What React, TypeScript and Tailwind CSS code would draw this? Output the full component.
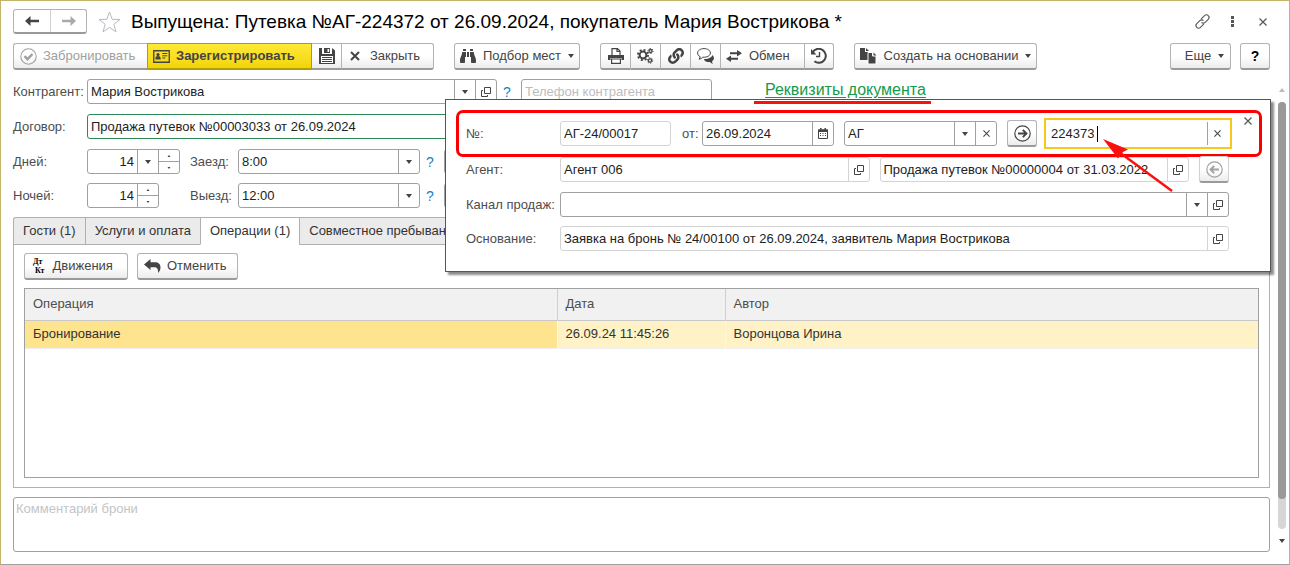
import React from 'react';
import clsx from 'clsx';
import { FaBinoculars, FaLink } from 'react-icons/fa';

const BUTTON =
  'flex h-[27px] items-center border border-b-2 border-[#b3b3b3] border-b-[#9a9a9a] bg-linear-to-b from-white from-50% to-[#ececec] text-[#444]';

const Caret = ({ up = false, small = false }: { up?: boolean; small?: boolean }) => (
  <svg width={small ? 4 : 6} height={small ? 2 : 4} viewBox="0 0 6 4" className={clsx('shrink-0', up && 'rotate-180')}>
    <path d="M0 0h6L3 4z" fill="currentColor" />
  </svg>
);

const Cross = ({ size = 7 }: { size?: number }) => (
  <svg width={size} height={size} viewBox="0 0 8 8">
    <path d="M.5.5l7 7M7.5.5l-7 7" stroke="currentColor" strokeWidth="1.2" fill="none" />
  </svg>
);

const OpenIcon = () => (
  <svg width="10" height="10" viewBox="0 0 10 10" fill="none" stroke="currentColor">
    <path d="M3.5.5h6v6h-6z" />
    <path d="M2 3.5H.5v6h6V8" />
  </svg>
);

const CalendarIcon = () => (
  <svg width="10" height="11" viewBox="0 0 10 11">
    <path d="M.5 2h9v8.5h-9z" fill="none" stroke="currentColor" />
    <path d="M0 1.5h10V4H0zM2 0h1.5v2H2zM6.5 0H8v2H6.5z" fill="currentColor" />
    <path d="M2 5.5h6M2 7.5h6" stroke="currentColor" strokeDasharray="1 1.5" />
  </svg>
);

const Arrow = ({ right = false }: { right?: boolean }) => (
  <svg width="14" height="10" viewBox="0 0 14 10" className={clsx(right && 'rotate-180')}>
    <path d="M5.5 0v3.8H14v2.4H5.5V10L0 5z" fill="currentColor" />
  </svg>
);

const CircleArrow = ({ left = false }: { left?: boolean }) => (
  <svg width="17" height="17" viewBox="0 0 17 17" fill="none" stroke="currentColor" className={clsx(left && 'rotate-180')}>
    <circle cx="8.5" cy="8.5" r="7.7" strokeWidth="1.2" />
    <path d="M4 8.5h8M8.8 4.8l3.7 3.7-3.7 3.7" strokeWidth="1.9" />
  </svg>
);

const CheckCircle = () => (
  <svg width="17" height="17" viewBox="0 0 17 17" fill="none" stroke="currentColor">
    <circle cx="8.5" cy="8.5" r="7.7" strokeWidth="1.1" />
    <path d="M4.5 8.2l3 3L12.5 6" strokeWidth="2.4" />
  </svg>
);

const CardIcon = () => (
  <svg width="17" height="13" viewBox="0 0 17 13">
    <path d="M.75.75h15.5v11.5H.75z" fill="none" stroke="currentColor" strokeWidth="1.3" />
    <circle cx="5" cy="4.6" r="1.6" fill="currentColor" />
    <path d="M2.4 9.5V8c0-1.3 1-2 2.6-2s2.6.7 2.6 2v1.5z" fill="currentColor" />
    <path d="M9.3 3.5h5M9.3 5.8h5M9.3 8h3" stroke="currentColor" />
  </svg>
);

const SaveIcon = () => (
  <svg width="16" height="16" viewBox="0 0 16 16">
    <path d="M0 0h3v6h10V0l3 2.5V16H0zM5 0h6v5H5z" fill="currentColor" />
    <path d="M8.5 1h1.7v3H8.5zM2 8h12v7H2z" fill="#fff" />
    <path d="M3 9.5h10M3 11.5h10M3 13.5h10" stroke="currentColor" />
  </svg>
);

const PrintIcon = () => (
  <svg width="16" height="16" viewBox="0 0 16 16">
    <path d="M4 7V.6h5.500L12 3v4M9 .6V3.500h3" fill="none" stroke="currentColor" strokeWidth="1.2" />
    <path d="M0 7h16v5h-2.500v-2h-11v2H0z" fill="currentColor" />
    <path d="M3.600 11h8.800v4.400H3.600z" fill="#fff" stroke="currentColor" strokeWidth="1.2" />
  </svg>
);

const GearsIcon = () => (
  <svg width="17" height="16" viewBox="0 0 17 16" fill="none" stroke="currentColor">
    <circle cx="6" cy="7" r="3.400" strokeWidth="2" />
    <circle cx="6" cy="7" r="5.100" strokeWidth="1.800" strokeDasharray="2 2" />
    <circle cx="13.500" cy="3" r="1.500" strokeWidth="1.300" />
    <circle cx="13.500" cy="3" r="2.500" strokeWidth="1" strokeDasharray="1.300 1.300" />
    <circle cx="13" cy="12.500" r="1.600" strokeWidth="1.300" />
    <circle cx="13" cy="12.500" r="2.700" strokeWidth="1" strokeDasharray="1.400 1.400" />
  </svg>
);

const ChatIcon = () => (
  <svg width="17" height="16" viewBox="0 0 17 16">
    <path d="M15.500 7c.9.9 1.400 2 1.400 3.200 0 1.400-.8 2.500-1.900 3.200.1.900.4 1.600 1 2.300-1.500-.2-2.500-.8-3.200-1.600-3 .1-5.300-.9-6-2.900 4.300-.1 7.800-1.400 8.700-4.200z" fill="currentColor" />
    <path d="M7 .6C3.300.6.600 2.500.600 5c0 1.700 1 3 2.600 3.700-.1 1-.5 1.800-1.200 2.500 1.600-.2 2.900-.9 3.800-2 4.500.3 7.600-1.500 7.600-4.200C13.400 2.500 10.700.6 7 .6z" fill="#fff" stroke="currentColor" />
  </svg>
);

const ExchangeIcon = () => (
  <svg width="16" height="12" viewBox="0 0 16 12">
    <path d="M4 2.200h7V0l5 3.200-5 3.200V4.200H4zM12 7.800H5V5.600L0 8.800 5 12V9.800h7z" fill="currentColor" />
  </svg>
);

const HistoryIcon = () => (
  <svg width="16" height="16" viewBox="0 0 16 16" fill="none" stroke="currentColor">
    <path d="M1.600 4.500A7 7 0 1 1 3.400 13.300" strokeWidth="2" />
    <path d="M0 1v5.500h5.500z" fill="currentColor" stroke="none" />
    <path d="M8.500 4v4.500H5" strokeWidth="1.400" />
  </svg>
);

const CopyIcon = () => (
  <svg width="17" height="16" viewBox="0 0 17 16">
    <path d="M0 0h5v4h4v8H0z" fill="currentColor" />
    <path d="M6 0l3 3H6z" fill="currentColor" />
    <path d="M8 4.500h4.500V8H16v8H8z" fill="currentColor" stroke="#fff" />
    <path d="M13.500 4.500L16.500 7.500h-3z" fill="currentColor" />
  </svg>
);

const UndoIcon = () => (
  <svg width="17" height="14" viewBox="0 0 17 14">
    <path d="M0 5.500L6.500 0v3.200H11c3.500 0 5.500 2 5.500 5 0 2.300-.9 4.300-2.500 5.800.4-3.500-.5-5.800-3.500-5.800h-4V11z" fill="currentColor" />
  </svg>
);

const ThinLink = () => (
  <svg width="17" height="17" viewBox="0 0 24 24" fill="none" stroke="currentColor" strokeWidth="1.500">
    <path d="M10 8.500l4.800-4.800a3.600 3.600 0 0 1 5.300 0c1.500 1.500 1.500 3.700 0 5.200l-4.300 4.300c-1.500 1.500-3.800 1.500-5.200 0" />
    <path d="M14 15.500l-4.800 4.800a3.600 3.600 0 0 1-5.300 0c-1.500-1.500-1.500-3.700 0-5.200l4.300-4.300c1.500-1.500 3.800-1.500 5.200 0" />
  </svg>
);

type Part = 'caret' | 'open' | 'clear' | 'calendar' | 'spin';

const PART_LABELS: Record<Part, string> = {
  caret: 'Выбрать',
  open: 'Открыть',
  clear: 'Очистить',
  calendar: 'Календарь',
  spin: 'Изменить',
};

interface FieldProps {
  id: string;
  value?: string;
  placeholder?: string;
  parts?: Part[];
  className?: string;
  tone?: 'normal' | 'light' | 'green';
  alignRight?: boolean;
  label?: string;
}

const Field: React.FC<FieldProps> = ({ id, value, placeholder, parts = [], className, tone = 'normal', alignRight, label }) => {
  const line = tone === 'light' ? 'border-[#d4d4d4]' : tone === 'green' ? 'border-[#2e8b57]' : 'border-[#a0a0a0]';
  return (
    <div className={clsx('flex h-[25px] min-w-0 rounded-[3px] border bg-white', line, className)}>
      <input
        id={id}
        aria-label={label}
        defaultValue={value}
        placeholder={placeholder}
        readOnly={tone === 'light'}
        className={clsx(
          'w-full min-w-0 flex-1 bg-transparent px-[3px] text-[#222] outline-none placeholder:text-[#bdbdbd]',
          alignRight && 'text-right'
        )}
      />
      {parts.map((part) =>
        part === 'spin' ? (
          <div key={part} className={clsx('flex w-[21px] shrink-0 flex-col border-l text-[#444]', line)}>
            <button aria-label="Больше" className={clsx('flex flex-1 items-center justify-center border-b', line)}>
              <Caret up small />
            </button>
            <button aria-label="Меньше" className="flex flex-1 items-center justify-center">
              <Caret small />
            </button>
          </div>
        ) : (
          <button
            key={part}
            aria-label={PART_LABELS[part]}
            className={clsx('flex w-[21px] shrink-0 items-center justify-center border-l text-[#444]', line)}
          >
            {part === 'caret' && <Caret />}
            {part === 'open' && <OpenIcon />}
            {part === 'clear' && <Cross />}
            {part === 'calendar' && <CalendarIcon />}
          </button>
        )
      )}
    </div>
  );
};

const Help = () => (
  <button aria-label="Подсказка" className="w-6 shrink-0 pr-1 text-center text-sm font-medium text-[#1a7fc4]">
    ?
  </button>
);

const Label = ({ htmlFor, className, children }: { htmlFor: string; className?: string; children: React.ReactNode }) => (
  <label htmlFor={htmlFor} className={clsx('shrink-0 whitespace-nowrap text-[#4d4d4d]', className)}>
    {children}
  </label>
);

const TABS = ['Гости (1)', 'Услуги и оплата', 'Операции (1)', 'Совместное пребывание'];

const Toolbar = () => (
  <div className="mt-[9px] flex whitespace-nowrap pr-4">
    <button disabled className={clsx(BUTTON, 'w-[134px] gap-[6px] rounded-l-[3px] border-r-0 pl-[6px] text-[#a0a0a0]!')}>
      <CheckCircle />
      Забронировать
    </button>
    <button className="flex h-[27px] w-[165px] items-center gap-[6px] border border-b-2 border-[#b59d00] bg-linear-to-b from-[#ffe936] to-[#f2d500] pl-[5px] font-bold text-[#444]">
      <CardIcon />
      Зарегистрировать
    </button>
    <button aria-label="Записать" className={clsx(BUTTON, 'w-[30px] justify-center border-l-0')}>
      <SaveIcon />
    </button>
    <button className={clsx(BUTTON, 'w-[92px] gap-[10px] rounded-r-[3px] border-l-0 pl-2')}>
      <svg width="10" height="10" viewBox="0 0 10 10">
        <path d="M1 1l8 8M9 1L1 9" stroke="currentColor" strokeWidth="2" />
      </svg>
      Закрыть
    </button>

    <button className={clsx(BUTTON, 'ml-5 w-[126px] justify-center gap-[7px] rounded-[3px]')}>
      <FaBinoculars size={16} />
      Подбор мест
      <Caret />
    </button>

    <div className="ml-5 flex">
      <button aria-label="Печать" className={clsx(BUTTON, 'w-[31px] justify-center rounded-l-[3px]')}>
        <PrintIcon />
      </button>
      <button aria-label="Настройки" className={clsx(BUTTON, 'w-[30px] justify-center border-l-0')}>
        <GearsIcon />
      </button>
      <button aria-label="Ссылка" className={clsx(BUTTON, 'w-[30px] justify-center border-l-0')}>
        <FaLink size={16} />
      </button>
      <button aria-label="Обсуждение" className={clsx(BUTTON, 'w-[30px] justify-center border-l-0')}>
        <ChatIcon />
      </button>
      <button className={clsx(BUTTON, 'w-[84px] gap-[7px] border-l-0 pl-[5px]')}>
        <ExchangeIcon />
        Обмен
      </button>
      <button aria-label="История" className={clsx(BUTTON, 'w-[29px] justify-center rounded-r-[3px] border-l-0')}>
        <HistoryIcon />
      </button>
    </div>

    <button className={clsx(BUTTON, 'ml-5 w-[183px] justify-center gap-[7px] rounded-[3px]')}>
      <CopyIcon />
      Создать на основании
      <Caret />
    </button>

    <button className={clsx(BUTTON, 'ml-auto w-[61px] justify-center gap-[7px] rounded-[3px] pl-2')}>
      Еще
      <Caret />
    </button>
    <button aria-label="Справка" className={clsx(BUTTON, 'ml-[9px] w-[30px] justify-center rounded-[3px] text-sm font-bold text-black!')}>
      ?
    </button>
  </div>
);

const DetailsPopup = () => (
  <section
    aria-label="Реквизиты документа"
    className="absolute top-5 -right-px left-[432px] z-10 border border-[#555] bg-white pt-[10px] pr-2 pb-5 pl-[10px] shadow-[3px_3px_2px_rgba(0,0,0,0.45)]"
  >
    <div className="flex items-center rounded-[7px] border-3 border-[#fb0000] py-[5px] pr-[27px] pl-[7px]">
      <Label htmlFor="number" className="w-[94px]">№:</Label>
      <Field id="number" value="АГ-24/00017" tone="light" className="w-[111px]" />
      <Label htmlFor="date" className="w-[31px] pl-[11px]">от:</Label>
      <Field id="date" value="26.09.2024" parts={['calendar']} className="w-[132px]" />
      <Field id="prefix" label="Префикс" value="АГ" parts={['caret', 'clear']} className="ml-[10px] w-[153px]" />
      <button aria-label="Перейти" className={clsx(BUTTON, 'ml-[10px] w-[30px] shrink-0 justify-center rounded-[3px]')}>
        <CircleArrow />
      </button>
      <div className="ml-[7px] flex h-[31px] min-w-0 flex-1 items-center border-2 border-[#f9c81e] pr-[3px] pl-[5px]">
        <input
          id="ticket"
          aria-label="Номер путевки"
          defaultValue="224373"
          className="field-sizing-content min-w-0 bg-transparent text-[#222] outline-none"
        />
        <span className="ml-[3px] h-4 w-px bg-black" />
        <button aria-label="Очистить" className="ml-auto flex h-[23px] w-5 items-center justify-center border-l border-[#a0a0a0] text-[#444]">
          <Cross />
        </button>
      </div>
    </div>

    <div className="pr-[33px] pl-[10px]">
      <div className="flex h-[25px] items-center">
        <Label htmlFor="agent" className="w-[94px]">Агент:</Label>
        <Field id="agent" value="Агент 006" tone="light" parts={['open']} className="flex-1" />
        <Field
          id="agentContract"
          label="Договор агента"
          value="Продажа путевок №00000004 от 31.03.2022"
          tone="light"
          parts={['open']}
          className="ml-[10px] flex-1"
        />
        <button aria-label="Назад" className={clsx(BUTTON, 'ml-[10px] w-[30px] shrink-0 justify-center rounded-[3px] border-[#d0d0d0] text-[#a0a0a0]!')}>
          <CircleArrow left />
        </button>
      </div>
      <div className="mt-[10px] flex items-center">
        <Label htmlFor="channel" className="w-[94px]">Канал продаж:</Label>
        <Field id="channel" parts={['caret', 'open']} className="flex-1" />
      </div>
      <div className="mt-[9px] flex items-center">
        <Label htmlFor="basis" className="w-[94px]">Основание:</Label>
        <Field
          id="basis"
          value="Заявка на бронь № 24/00100 от 26.09.2024, заявитель Мария Вострикова"
          tone="light"
          parts={['open']}
          className="flex-1"
        />
      </div>
    </div>

    <button aria-label="Закрыть панель" className="absolute top-[17px] right-[18px] text-[#555]">
      <Cross size={8} />
    </button>
    <svg width="72" height="54" viewBox="0 0 72 54" className="pointer-events-none absolute top-[39px] right-[97px]">
      <path d="M71 52L18 13" stroke="#fb1010" strokeWidth="2.500" />
      <path d="M2 0l25 10.500-5 2.500-5 6.500z" fill="#fb1010" />
    </svg>
  </section>
);

const OperationsTable = () => (
  <div className="mt-2 flex-1 border border-[#a0a0a0] bg-white">
    <table className="w-full table-fixed border-collapse text-left">
      <colgroup>
        <col className="w-[532px]" />
        <col className="w-[168px]" />
        <col />
      </colgroup>
      <thead>
        <tr className="h-[31px] border-b border-[#c8c8c8] bg-[#f1f1f1] text-[#4d4d4d]">
          <th className="border-r border-[#d0d0d0] px-2 font-normal">Операция</th>
          <th className="border-r border-[#d0d0d0] px-2 font-normal">Дата</th>
          <th className="px-2 font-normal">Автор</th>
        </tr>
      </thead>
      <tbody>
        <tr className="h-7 border-b border-[#eee] bg-[#fff2c6] text-[#333]">
          <td className="border-r border-[#fff8e0] bg-[#ffe48f] px-2">Бронирование</td>
          <td className="border-r border-[#fff8e0] px-2">26.09.24 11:45:26</td>
          <td className="px-2">Воронцова Ирина</td>
        </tr>
      </tbody>
    </table>
  </div>
);

const Scrollbar = () => (
  <div className="flex w-2 shrink-0 flex-col items-center pt-[9px] pb-[21px] text-[#bbb]">
    <Caret up />
    <div className="mt-[10px] flex w-full flex-1 flex-col rounded-full bg-[#d6d6d6]">
      <div className="h-[93%] rounded-full bg-[#999]" />
    </div>
    <span className="mt-[10px] flex text-[#444]">
      <Caret />
    </span>
  </div>
);

export default function App() {
  return (
    <main className="flex min-h-screen flex-col border border-[#c4b46a] border-b-[#a0a0a0] bg-white pt-2 pr-[3px] pl-3 font-['Liberation_Sans',Arial,sans-serif] text-[13px] leading-4">
      <header className="flex h-[25px] items-center pr-4">
        <div className="flex h-[25px] rounded-[3px] border border-b-2 border-[#b3b3b3] border-b-[#9a9a9a]">
          <button aria-label="Назад" className="flex w-9 items-center justify-center text-[#444]">
            <Arrow />
          </button>
          <button aria-label="Вперед" className="flex w-9 items-center justify-center border-l border-[#d0d0d0] text-[#aaa]">
            <Arrow right />
          </button>
        </div>
        <button aria-label="В избранное" className="ml-[11px] text-[#b5b9c0]">
          <svg width="23" height="22" viewBox="0 0 23 22">
            <path d="M11.500 1l2.700 7.300 7.800.2-6.200 4.800 2.200 7.500-6.500-4.400L5 20.800l2.200-7.500L1 8.500l7.800-.2z" fill="none" stroke="currentColor" />
          </svg>
        </button>
        <h1 className="ml-[10px] text-[19px] leading-6 whitespace-nowrap text-black">
          Выпущена: Путевка №АГ-224372 от 26.09.2024, покупатель Мария Вострикова *
        </h1>
        <div className="ml-auto flex items-center pr-[3px] text-[#555]">
          <button aria-label="Получить ссылку">
            <ThinLink />
          </button>
          <button aria-label="Меню" className="ml-5">
            <svg width="3" height="11" viewBox="0 0 3 11" fill="currentColor">
              <path d="M0 0h3v3H0zM0 4h3v3H0zM0 8h3v3H0z" />
            </svg>
          </button>
          <button aria-label="Закрыть окно" className="ml-[25px]">
            <Cross size={8} />
          </button>
        </div>
      </header>

      <Toolbar />

      <div className="mt-[9px] flex flex-1 gap-2">
        <div className="relative flex min-w-0 flex-1 flex-col pb-3">
          <div className="flex h-[25px] items-start">
            <Label htmlFor="partner" className="w-[74px] self-center">Контрагент:</Label>
            <Field id="partner" value="Мария Вострикова" parts={['caret', 'open']} className="w-[410px]" />
            <span className="flex self-center">
              <Help />
            </span>
            <Field id="phone" label="Телефон контрагента" placeholder="Телефон контрагента" className="w-[191px]" />
            <div className="relative ml-[53px] flex">
              <a href="#details" className="text-base leading-[22px] whitespace-nowrap text-[#159a4a] underline underline-offset-2">
                Реквизиты документа
              </a>
              <span className="absolute top-full -right-[5px] -left-[11px] z-20 h-[3px] bg-[#fb1010]" />
            </div>
          </div>
          <div className="mt-[10px] flex items-center">
            <Label htmlFor="contract" className="w-[74px]">Договор:</Label>
            <Field id="contract" value="Продажа путевок №00003033 от 26.09.2024" tone="green" className="w-[410px]" />
          </div>
          <div className="mt-[10px] flex items-center">
            <Label htmlFor="days" className="w-[74px]">Дней:</Label>
            <Field id="days" value="14" parts={['caret', 'spin']} alignRight className="w-[93px]" />
            <Label htmlFor="checkin" className="ml-[10px] w-12">Заезд:</Label>
            <Field id="checkin" value="8:00" parts={['caret']} className="w-[182px]" />
            <Help />
            <Field id="checkinDate" label="Дата заезда" className="w-[120px]" />
          </div>
          <div className="mt-[9px] flex items-center">
            <Label htmlFor="nights" className="w-[74px]">Ночей:</Label>
            <Field id="nights" value="14" parts={['spin']} alignRight className="w-[72px]" />
            <Label htmlFor="checkout" className="ml-[31px] w-12">Выезд:</Label>
            <Field id="checkout" value="12:00" parts={['caret']} className="w-[182px]" />
            <Help />
            <Field id="checkoutDate" label="Дата выезда" className="w-[120px]" />
          </div>

          <div role="tablist" className="mt-[9px] flex">
            {TABS.map((tab, i) => (
              <button
                key={tab}
                role="tab"
                aria-selected={i === 2}
                className={clsx(
                  'relative -mb-px h-7 border border-r-0 border-[#b0b0b0] px-[9px] whitespace-nowrap text-[#333] first:rounded-tl-[3px] last:border-r',
                  i === 2 ? 'border-b-white bg-white' : 'bg-[#ebebeb]'
                )}
              >
                {tab}
              </button>
            ))}
          </div>
          <div className="flex flex-1 flex-col border border-[#b0b0b0] px-[10px] pt-2 pb-[9px]">
            <div className="flex gap-[9px]">
              <button className={clsx(BUTTON, 'w-[104px] gap-2 rounded-[3px] pl-[6px]')}>
                <span aria-hidden className="flex flex-col font-['Liberation_Serif',serif] text-[8px] leading-[9px] font-bold text-black">
                  <span>Дт</span>
                  <span className="pl-1">Кт</span>
                </span>
                Движения
              </button>
              <button className={clsx(BUTTON, 'w-[101px] gap-[6px] rounded-[3px] pl-[6px]')}>
                <UndoIcon />
                Отменить
              </button>
            </div>
            <OperationsTable />
          </div>

          <textarea
            aria-label="Комментарий брони"
            placeholder="Комментарий брони"
            className="mt-[9px] block h-[55px] w-full resize-none rounded-[3px] border border-[#a0a0a0] px-[2px] py-[3px] outline-none placeholder:text-[#c4c4c4]"
          />
          <DetailsPopup />
        </div>
        <Scrollbar />
      </div>
    </main>
  );
}
